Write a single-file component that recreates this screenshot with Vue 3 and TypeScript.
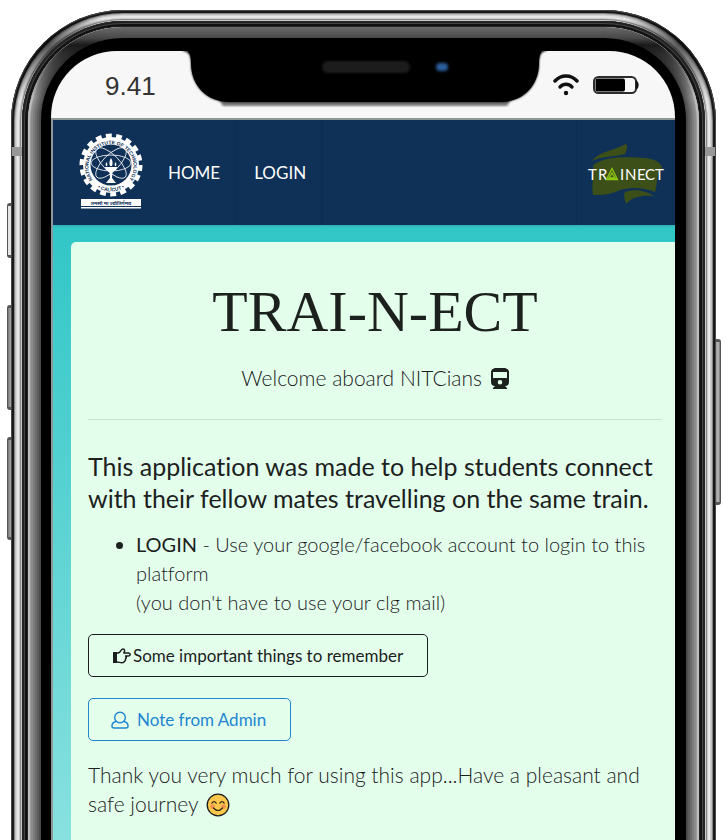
<script setup lang="ts">
interface NavLink {
  label: string
  href: string
}

const links: NavLink[] = [
  { label: 'HOME', href: '#home' },
  { label: 'LOGIN', href: '#login' },
]

const orbits: number[] = [0, 45, 135]
</script>

<template>
  <div class="page">
    <div class="phone">
      <span class="key key-mute"></span>
      <span class="key key-up"></span>
      <span class="key key-down"></span>
      <span class="key key-power"></span>
      <div class="rail">
        <span class="antenna antenna-left"></span>
        <span class="antenna antenna-right"></span>
        <div class="groove">
          <div class="rim">
            <div class="bezel">
              <div class="screen">
                <header class="status">
                  <span class="time">9.41</span>
                  <svg class="notch" viewBox="0 0 358 56" aria-hidden="true">
                    <defs>
                      <filter id="soft" x="-20%" y="-60%" width="140%" height="220%">
                        <feGaussianBlur stdDeviation="1.8" />
                      </filter>
                      <filter id="edge" x="-5%" y="-10%" width="110%" height="120%">
                        <feGaussianBlur stdDeviation="0.8" />
                      </filter>
                    </defs>
                    <path d="M34 49H326L322 55H38Z" fill="#777" filter="url(#edge)" />
                    <path d="M-2 -4V0C4 0 6 5 6 12C6 34 21 51 45 51H315C339 51 354 34 354 12C354 5 356 0 361 0V-4Z" fill="#000" filter="url(#edge)" />
                    <path d="M3 0C5 2 6 6 6 12C6 34 21 51 45 51H315C339 51 354 34 354 12C354 6 355 2 357 0Z" fill="#000" />
                    <rect x="137" y="10" width="88" height="12" rx="6" fill="#1b1b1b" filter="url(#soft)" />
                    <rect x="251" y="12" width="12" height="8" rx="4" fill="#2a5f9e" filter="url(#soft)" />
                  </svg>
                  <span class="indicators">
                    <svg class="wifi" viewBox="0 0 26 22" fill="none" stroke="#111" stroke-linecap="round" aria-hidden="true">
                      <path d="M2 7C8 .3 18 .3 24 7" stroke-width="3.400" />
                      <path d="M7 13C10.500 9.300 15.500 9.300 19 13" stroke-width="3.400" />
                      <circle cx="13" cy="19" r="2.200" fill="#111" stroke="none" />
                    </svg>
                    <svg class="battery" viewBox="0 0 46 20" aria-hidden="true">
                      <rect x="1" y="1" width="42" height="16" rx="4.500" fill="#f7f7f7" stroke="#2c2c2c" stroke-width="2" />
                      <rect x="2.500" y="2.500" width="29.500" height="13" rx="2" fill="#000" />
                      <path d="M43 4C46.500 6 46.500 12 43 14Z" fill="#111" />
                    </svg>
                  </span>
                </header>

                <div class="app">
                  <nav class="navbar">
                    <a class="seal" href="#home" aria-label="National Institute of Technology Calicut">
                      <svg viewBox="0 0 64 76">
                        <defs>
                          <path id="ringTop" d="M14.600 47.900A22.500 22.500 0 1 1 49.400 47.900" />
                          <path id="ringBottom" d="M11.500 48.500A26.200 26.200 0 0 0 52.500 48.500" />
                        </defs>
                        <circle cx="32" cy="32" r="29" fill="none" stroke="#fff" stroke-width="5" pathLength="36" stroke-dasharray="1.150 .85" />
                        <circle cx="32" cy="32" r="28" fill="#fff" />
                        <circle cx="32" cy="32" r="20.500" fill="#0f3057" />
                        <g fill="none" stroke="#fff" stroke-width=".8">
                          <ellipse v-for="a in orbits" :key="a" cx="32" cy="30" rx="20" ry="8" :transform="`rotate(${a} 32 30)`" />
                        </g>
                        <path d="M26 34H38C38 37 35 38 33.500 39L33 45L37 50H27L31 45L30.500 39C29 38 26 37 26 34ZM27 33Q26 31 27.500 29Q29 31 28 33ZM31 33Q29.500 29 32 25Q34.500 29 33 33ZM36 33Q35 31 36.500 29Q38 31 37 33Z" fill="#fff" />
                        <text class="seal-text"><textPath href="#ringTop" startOffset="50%" text-anchor="middle">NATIONAL INSTITUTE OF TECHNOLOGY</textPath></text>
                        <text class="seal-text"><textPath href="#ringBottom" startOffset="50%" text-anchor="middle">• CALICUT •</textPath></text>
                        <rect x="2" y="66" width="60" height="7" fill="#fff" />
                        <rect x="2" y="74" width="60" height="1.500" fill="#fff" />
                        <text x="32" y="71.500" class="motto" text-anchor="middle">तमसो मा ज्योतिर्गमय</text>
                      </svg>
                    </a>
                    <a v-for="link in links" :key="link.label" class="nav-link" :href="link.href">{{ link.label }}</a>
                    <a class="brand" href="#home" aria-label="Trainect">
                      <svg viewBox="0 0 76 62">
                        <g fill="#3d4f19">
                          <path d="M4 19C10 10 27 8 38 2C40 4 39 8 37 12C27 15 13 14 4 19Z" />
                          <path d="M5 23C21 12 46 16 57 16C66 17 74 20 74 27C68 31 70 41 67 50C55 46 42 44 30 49C21 53 13 53 5 53C3 42 7 31 5 23Z" />
                          <path d="M37 50C47 46 59 49 66 54C55 53 45 54 38 62C37 57 35 54 37 50Z" />
                        </g>
                        <text class="brand-text" y="38" x="0 10">TR</text>
                        <text class="brand-text" y="38" x="32 37 49 57 67">INECT</text>
                        <path d="M24 26.500L29.500 37.500H18.500ZM24 31L27 36H21Z" fill="none" stroke="#8fc814" stroke-width="1.300" />
                      </svg>
                    </a>
                  </nav>

                  <main class="stage">
                    <article class="card">
                      <h1>TRAI-N-ECT</h1>
                      <p class="welcome">
                        Welcome aboard NITCians
                        <svg class="train" viewBox="0 0 18 22" aria-hidden="true">
                          <path fill-rule="evenodd" d="M4 0H14Q18 1 18 4V14Q18 18 14 18L16 20V21H2V20L4 18Q0 18 0 14V4Q0 1 4 0ZM2 4V10H16V4ZM9 12A2.300 2.300 0 1 0 9 16.600A2.300 2.300 0 1 0 9 12Z" fill="#1c211e" />
                        </svg>
                      </p>
                      <hr />
                      <h2>This application was made to help students connect with their fellow mates travelling on the same train.</h2>
                      <ul>
                        <li><strong>LOGIN</strong> - Use your google/facebook account to login to this platform<br />(you don't have to use your clg mail)</li>
                      </ul>
                      <div class="actions">
                        <button type="button" class="button dark">
                          <svg class="hand" viewBox="0 0 18 16" aria-hidden="true">
                            <rect x="0" y="4" width="4" height="11" fill="#1b1c1d" />
                            <path d="M4 5H5.500C8 4 8 1 10 1C12 1 12 3.500 10.800 5H15.500Q17.200 5.300 17.200 6.600Q17.200 8 15.500 8H12.500Q14 9.500 12.500 11Q13 12.700 11.500 13.200Q11 14.800 9 14.800C7 14.800 6 14 4 14" fill="none" stroke="#1b1c1d" stroke-width="1.500" stroke-linejoin="round" />
                          </svg>
                          Some important things to remember
                        </button>
                        <button type="button" class="button blue">
                          <svg class="user" viewBox="0 0 18 18" fill="none" stroke="#2185d0" stroke-width="1.400" stroke-linejoin="round" aria-hidden="true">
                            <circle cx="9" cy="6.500" r="5.300" />
                            <path d="M5 10.500Q1 11.500 .9 15Q1 17 3 17H15Q17 17 17.100 15Q17 11.500 13 10.500" />
                          </svg>
                          Note from Admin
                        </button>
                      </div>
                      <p class="thanks">
                        Thank you very much for using this app...Have a pleasant and safe journey
                        <svg class="smile" viewBox="0 0 24 24" role="img" aria-label="smiling face">
                          <circle cx="12" cy="12" r="10.800" fill="#fcc84b" stroke="#1c1c1c" stroke-width="1.300" />
                          <g fill="#f5914f"><circle cx="6.500" cy="13.500" r="2.200" /><circle cx="17.500" cy="13.500" r="2.200" /></g>
                          <path d="M5.800 10.200Q8 7.200 10.200 10.200M13.800 10.200Q16 7.200 18.200 10.200M7.500 15Q12 20 16.500 15" fill="none" stroke="#2b2418" stroke-width="1.200" stroke-linecap="round" />
                        </svg>
                      </p>
                    </article>
                  </main>
                </div>
              </div>
            </div>
          </div>
        </div>
      </div>
    </div>
  </div>
</template>

<style>
body {
  background: #fff;
}
</style>

<style scoped>
* {
  box-sizing: border-box;
}
.page {
  display: flex;
  min-height: 100vh;
  padding: 10px 10px 0 11px;
  overflow: hidden;
  font-family: Lato, "Noto Sans", sans-serif;
  font-variant-ligatures: none;
  color: #1c211e;
}
.phone {
  position: relative;
  display: flex;
  flex: 1;
  min-width: 0;
  margin-bottom: -20px;
}
.key {
  position: absolute;
  left: -4px;
  width: 8px;
  border: 1px solid #555;
  border-width: 3px 1px;
  border-radius: 3px 0 0 3px;
  background: linear-gradient(to right, #777, #bbb 4px, #555 7px);
}
.key-mute {
  top: 193px;
  height: 55px;
  background: #e4e4e4;
}
.key-up {
  top: 295px;
  height: 105px;
}
.key-down {
  top: 427px;
  height: 103px;
}
.key-power {
  top: 329px;
  left: auto;
  right: -5px;
  height: 166px;
  border-radius: 0 3px 3px 0;
}
.rail,
.groove,
.rim,
.bezel {
  position: relative;
  display: flex;
  flex: 1;
  min-width: 0;
}
.rail {
  padding: 11px 11px 0;
  border-radius: 112px 112px 0 0;
  background: #c8c8c8;
  box-shadow:
    inset 0 0 0 1px #4a4a4a,
    inset 0 0 0 3px #181818,
    inset 0 0 0 4px #888,
    inset 0 0 0 5px #bdbdbd,
    inset 0 0 0 6px #d4d4d4,
    inset 0 0 0 8px #e6e6e6,
    inset 0 0 0 9px #c8c8c8,
    inset 0 0 0 10px #888;
}
.rail::before {
  position: absolute;
  inset: 0 0 auto;
  height: 130px;
  border-radius: 112px 112px 0 0;
  background:
    radial-gradient(circle at 38px 36px, rgba(0, 0, 0, 0.6), transparent 60px),
    radial-gradient(circle at calc(100% - 38px) 36px, rgba(0, 0, 0, 0.6), transparent 60px);
  content: "";
}
.antenna {
  position: absolute;
  top: 137px;
  width: 11px;
  height: 9px;
  background: #979797;
}
.antenna-left {
  left: 1px;
}
.antenna-right {
  right: 1px;
}
.groove {
  padding: 6px 6px 0;
  border-radius: 101px 101px 0 0;
  background: #242424;
  box-shadow:
    inset 0 0 0 2px #222,
    inset 0 0 0 3px #444,
    inset 0 0 0 5px #111;
}
.rim {
  padding: 11px 13px 0;
  border-radius: 95px 95px 0 0;
  background: #4c4c4c;
  box-shadow:
    inset 0 0 0 2px #bcbcbc,
    inset 0 0 0 3px #9a9a9a,
    inset 0 0 0 5px #8c8c8c,
    inset 0 0 0 7px #7c7c7c,
    inset 0 0 0 9px #6c6c6c,
    inset 0 0 0 11px #5c5c5c;
}
.rim::before {
  position: absolute;
  inset: 0 0 auto;
  height: 95px;
  border-radius: 95px 95px 0 0;
  background: linear-gradient(#6a6a6a, #484848 11px, #1a1a1a 18px, rgba(26, 26, 26, 0) 70px);
  content: "";
}
.bezel {
  padding: 13px 11px 0 10px;
  border-radius: 82px 82px 0 0;
  background: #000;
}
.screen {
  display: flex;
  flex: 1;
  flex-direction: column;
  min-width: 0;
  border-radius: 66px 66px 0 0;
  background: #f7f7f7;
}
.status {
  display: flex;
  height: 67px;
  padding: 0 36px 0 54px;
}
.time {
  width: 80px;
  padding-top: 19px;
  font: 26px/32px "Liberation Sans", sans-serif;
  color: #333;
}
.notch {
  flex: none;
  width: 358px;
  height: 56px;
  overflow: visible;
}
.indicators {
  display: flex;
  flex: none;
  gap: 14px;
  margin-left: auto;
  padding-top: 23px;
}
.wifi {
  width: 26px;
  height: 22px;
}
.battery {
  width: 46px;
  height: 20px;
  margin-top: 2px;
}
.app {
  display: flex;
  flex: 1;
  flex-direction: column;
  min-width: 0;
  overflow: hidden;
  border-top: 2px solid #8f9896;
  border-left: 2px solid #8f9896;
  background: linear-gradient(#2fc5c6, #31c6c7 105px, #8be2e0);
}
.navbar {
  display: flex;
  align-items: stretch;
  height: 105px;
  background: #0f3057;
  box-shadow: 0 1px 2px rgba(34, 36, 38, 0.15);
}
.seal {
  display: flex;
  width: 98px;
  padding: 13px 8px 0 26px;
}
.seal svg {
  width: 64px;
  height: 76px;
}
.seal-text {
  font: 700 5px "Liberation Sans", sans-serif;
  fill: #0f3057;
}
.motto {
  font: 700 5px "Noto Sans", sans-serif;
  fill: #0f3057;
}
.nav-link {
  display: flex;
  align-items: center;
  padding: 0 16px 0 17px;
  border-right: 1px solid #0e2c50;
  font-size: 17px;
  color: #fff;
  text-decoration: none;
}
.brand {
  display: flex;
  align-items: center;
  margin-left: auto;
  padding: 0 11px;
  border-left: 1px solid #0e2c50;
}
.brand svg {
  width: 76px;
  height: 62px;
  overflow: visible;
}
.brand-text {
  font: 400 15px Lato, sans-serif;
  fill: #fff;
}
.stage {
  flex: 1;
  padding: 17px 0 0 18px;
}
.card {
  height: 100%;
  padding: 36px 13px 20px 17px;
  border-radius: 5px 0 0;
  background: #e3ffec;
}
h1 {
  margin: 0;
  font: 400 58px/68px "Liberation Serif", serif;
  text-align: center;
}
.welcome,
.thanks,
li {
  font-size: 21px;
  font-weight: 300;
  line-height: 29px;
}
.welcome {
  margin: 17px 0 27px;
  text-align: center;
}
.train {
  width: 18px;
  height: 22px;
  margin-left: 3px;
  vertical-align: -4px;
}
hr {
  height: 1px;
  margin: 0;
  border: 0;
  background: #c9dfd1;
}
h2 {
  margin: 30px 0 16px;
  font-size: 25px;
  font-weight: 400;
  line-height: 32px;
}
ul {
  margin: 0;
  padding: 0 0 0 48px;
}
li {
  font-size: 20px;
}
strong {
  font-weight: 400;
}
.actions {
  display: flex;
  flex-direction: column;
  align-items: flex-start;
  gap: 21px;
  margin: 17px 0 19px;
}
.button {
  display: flex;
  align-items: center;
  height: 43px;
  padding: 0 24px;
  border: 1px solid #1b1c1d;
  border-radius: 5px;
  background: transparent;
  font: 400 17px/20px Lato, sans-serif;
  color: #1b1c1d;
}
.blue {
  padding-left: 22px;
  border-color: #2185d0;
  color: #2185d0;
}
.hand {
  width: 18px;
  height: 16px;
  margin-right: 2px;
}
.user {
  width: 18px;
  height: 18px;
  margin-right: 8px;
}
.thanks {
  margin: 0;
}
.smile {
  width: 24px;
  height: 24px;
  margin-left: 2px;
  vertical-align: -5px;
}
</style>
